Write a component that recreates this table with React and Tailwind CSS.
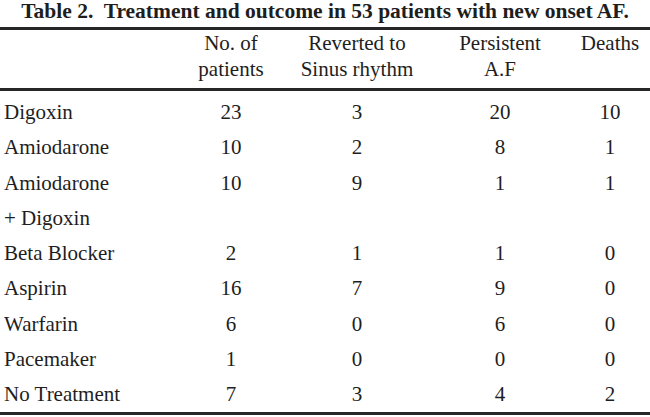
const rows = [
  { label: 'Digoxin', n: '23', reverted: '3', persistent: '20', deaths: '10' },
  { label: 'Amiodarone', n: '10', reverted: '2', persistent: '8', deaths: '1' },
  { label: 'Amiodarone', n: '10', reverted: '9', persistent: '1', deaths: '1' },
  { label: '+ Digoxin', n: '', reverted: '', persistent: '', deaths: '' },
  { label: 'Beta Blocker', n: '2', reverted: '1', persistent: '1', deaths: '0' },
  { label: 'Aspirin', n: '16', reverted: '7', persistent: '9', deaths: '0' },
  { label: 'Warfarin', n: '6', reverted: '0', persistent: '6', deaths: '0' },
  { label: 'Pacemaker', n: '1', reverted: '0', persistent: '0', deaths: '0' },
  { label: 'No Treatment', n: '7', reverted: '3', persistent: '4', deaths: '2' },
];

const cols = 'grid grid-cols-[168px_126px_126px_160px_60px]';

const Rule = ({ className = '' }) => <div className={`h-[3px] w-full bg-[#262626] ${className}`} />;

const App = () => {
  return (
    <div className="w-[650px] h-[417px] overflow-hidden bg-white text-[#1e1e1e] [font-family:'Liberation_Serif','Times_New_Roman',serif]">
      <h1 className="h-[22px] text-center text-[21.5px] leading-[22px] font-bold whitespace-pre">
        {'Table 2.  Treatment and outcome in 53 patients with new onset AF.'}
      </h1>
      <Rule className="mt-[5px]" />

      <div className={`${cols} text-[21px] leading-[26px] text-center`}>
        <div />
        <div>No. of<br />patients</div>
        <div>Reverted to<br />Sinus rhythm</div>
        <div>Persistent<br />A.F</div>
        <div>Deaths</div>
      </div>
      <Rule className="mt-[6px]" />

      <div className="pt-[4px] text-[21px] leading-[35.25px]">
        {rows.map((r, i) => (
          <div key={i} className={`${cols} text-center`}>
            <div className="pl-[4px] text-left whitespace-nowrap">{r.label}</div>
            <div>{r.n}</div>
            <div>{r.reverted}</div>
            <div>{r.persistent}</div>
            <div>{r.deaths}</div>
          </div>
        ))}
      </div>
      <Rule />
    </div>
  );
};

export default App;
